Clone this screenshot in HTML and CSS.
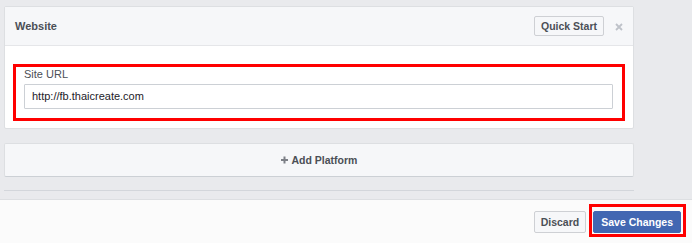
FILE: index.html
```html
<!DOCTYPE html>
<html>
<head>
<meta charset="utf-8">
<link rel="stylesheet" href="styles.css">
</head>
<body>
<div class="page">
  <div class="main">
    <div class="card">
      <div class="card-head">
        <div class="title">Website</div>
        <div class="head-actions">
          <button class="btn">Quick Start</button>
          <svg class="close" width="8" height="8" viewBox="0 0 8 8"><path d="M1 1L7 7M7 1L1 7" stroke="#bec2c9" stroke-width="1.8" fill="none"/></svg>
        </div>
      </div>
      <div class="card-body">
        <div class="mark-box">
          <label class="label">Site URL</label>
          <div class="input">http://fb.thaicreate.com</div>
        </div>
      </div>
    </div>
    <div class="add-platform">
      <svg class="plus" width="7" height="8" viewBox="0 0 7 8"><rect x="2.5" y="0.5" width="2" height="7" fill="#7d8087"/><rect x="0" y="3" width="7" height="2" fill="#7d8087"/></svg>
      <span>Add Platform</span>
    </div>
    <div class="sep"></div>
  </div>
  <div class="footer">
    <button class="btn btn-lg btn-discard">Discard</button>
    <div class="save-wrap">
      <button class="btn btn-lg btn-primary">Save Changes</button>
      <span class="mark-overlay"></span>
    </div>
  </div>
</div>
</body>
</html>
```

FILE: styles.css
```css
html, body {
  margin: 0;
  padding: 0;
}
body {
  background: #e9eaed;
  font-family: "Liberation Sans", Arial, Helvetica, sans-serif;
  font-size: 11px;
  color: #4b4f56;
  width: 692px;
  height: 243px;
  overflow: hidden;
}
.page {
  display: flex;
  flex-direction: column;
  height: 243px;
}
.main {
  width: 630px;
  margin-left: 4px;
  padding-top: 6px;
}
.card {
  background: #fff;
  border: 1px solid #dddfe2;
  border-radius: 2px;
}
.card-head {
  height: 38px;
  background: #f6f7f9;
  border-bottom: 1px solid #e5e6e9;
  display: flex;
  align-items: center;
  justify-content: space-between;
  padding: 0 10px 0 10px;
}
.title {
  font-weight: bold;
  font-size: 11px;
  color: #4b4f56;
}
.head-actions {
  display: flex;
  align-items: center;
  gap: 11px;
}
.btn {
  font-family: "Liberation Sans", Arial, Helvetica, sans-serif;
  font-weight: bold;
  font-size: 10.5px;
  color: #4b4f56;
  background: #f6f7f9;
  border: 1px solid #ced0d4;
  border-radius: 2px;
  height: 20px;
  padding: 0 6px;
  line-height: 18px;
  margin: 0;
}
.close {
  display: block;
  margin-top: 1px;
}
.card-body {
  padding: 18px 8px 7px 8px;
}
.mark-box {
  border: 3px solid #ff0000;
  padding: 0 9px 9px 8px;
  display: flex;
  flex-direction: column;
}
.label {
  line-height: 14px;
  height: 14px;
  color: #4b4f56;
  margin-bottom: 3px;
}
.input {
  height: 23px;
  border: 1px solid #ccd0d5;
  border-radius: 1px;
  padding: 0 7px;
  line-height: 23px;
  color: #1d2129;
  background: #fff;
}
.add-platform {
  margin-top: 14px;
  height: 32px;
  background: #f6f7f9;
  border: 1px solid #dddfe2;
  border-bottom-color: #ccd0d5;
  border-radius: 2px;
  display: flex;
  align-items: center;
  justify-content: center;
  gap: 4px;
  font-weight: bold;
  font-size: 10.5px;
  color: #4b4f56;
}
.plus {
  display: block;
}
.sep {
  margin-top: 13px;
  height: 1px;
  background: #d3d6db;
}
.footer {
  margin-top: 8px;
  flex: 1;
  background: #fbfbfb;
  border-top: 1px solid #dddfe2;
  display: flex;
  justify-content: flex-end;
  align-items: flex-start;
  padding: 11px 11px 0 0;
  gap: 7px;
}
.btn-lg {
  height: 22px;
  line-height: 20px;
  padding: 0 7px;
}
.btn-discard {
  padding: 0 6px;
}
.btn-primary {
  background: #4267b2;
  border-color: #4267b2;
  color: #fff;
}
.save-wrap {
  position: relative;
}
.mark-overlay {
  position: absolute;
  left: -4px;
  top: -7px;
  right: -5px;
  bottom: -4px;
  border: 3px solid #ff0000;
  pointer-events: none;
}
```
